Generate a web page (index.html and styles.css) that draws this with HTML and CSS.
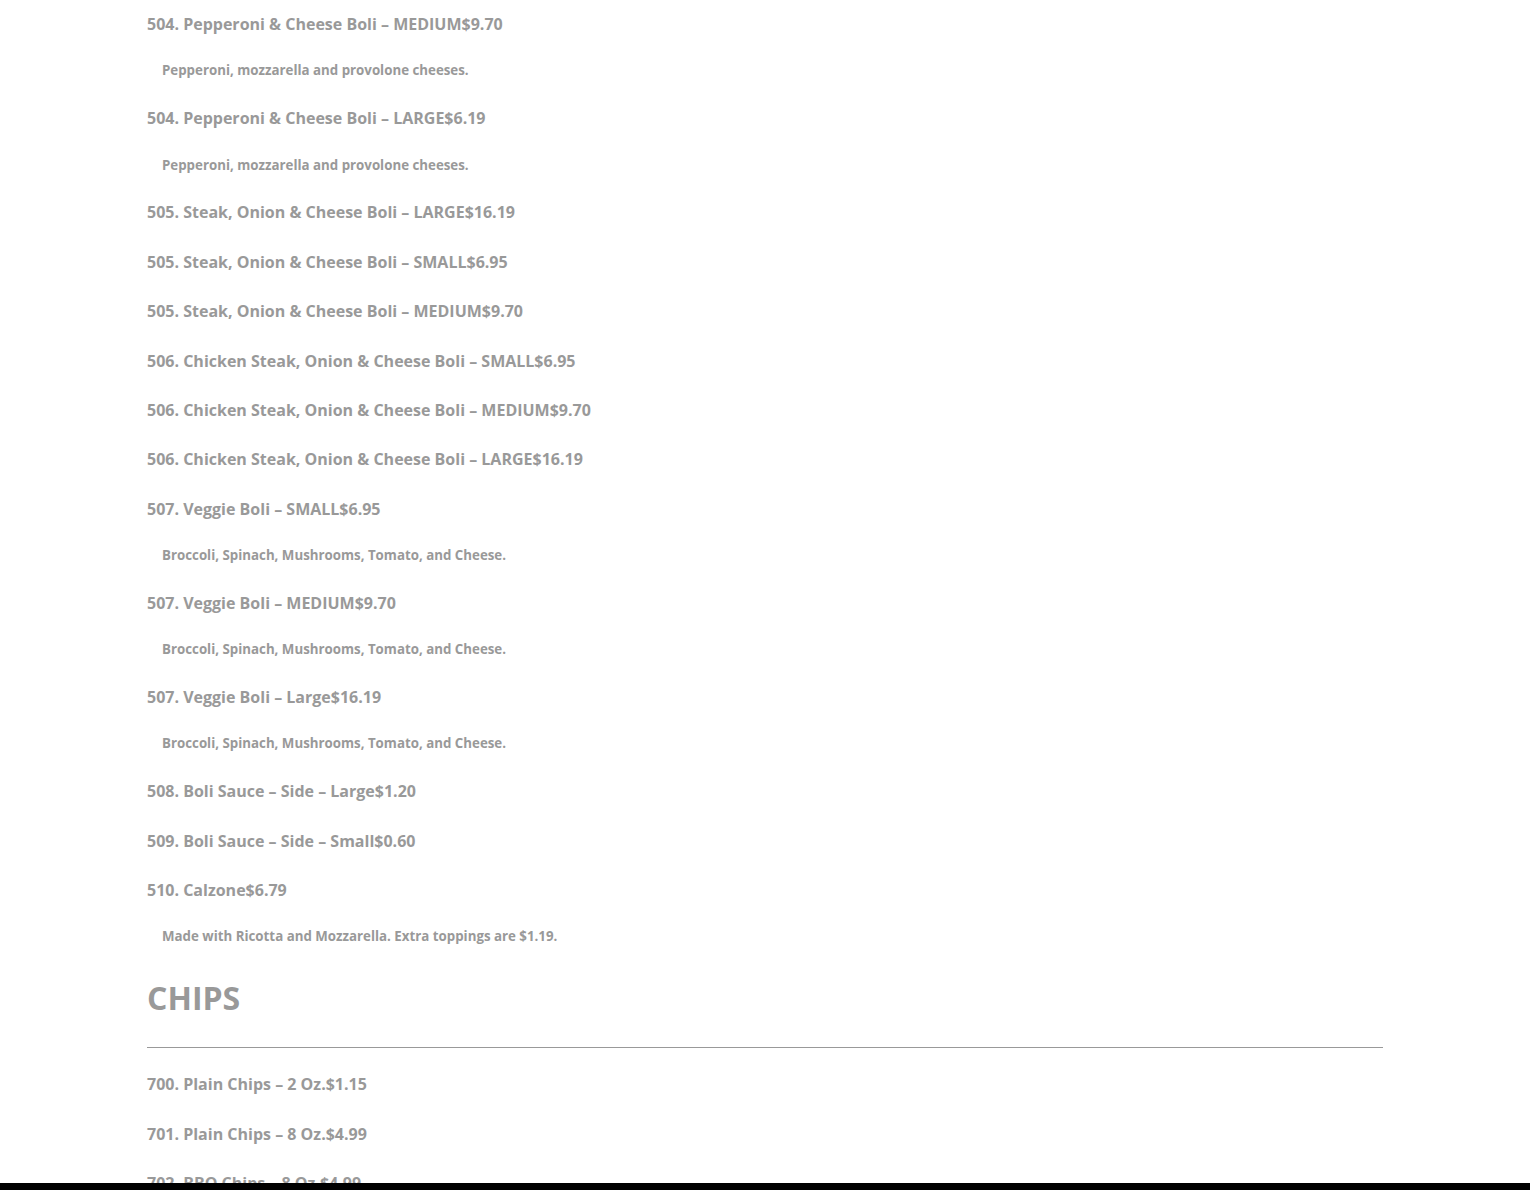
FILE: index.html
```html
<!DOCTYPE html>
<html lang="en">
<head>
  <meta charset="UTF-8" />
  <meta name="viewport" content="width=device-width, initial-scale=1.0" />
  <title>Menu</title>
  <link rel="stylesheet" href="styles.css">
</head>
<body>
  <div class="menu">
    <div class="item">
      <h4 class="item-title">504. Pepperoni &amp; Cheese Boli – MEDIUM<span class="price">$9.70</span></h4>
      <p class="item-desc">Pepperoni, mozzarella and provolone cheeses.</p>
    </div>
    <div class="item">
      <h4 class="item-title">504. Pepperoni &amp; Cheese Boli – LARGE<span class="price">$6.19</span></h4>
      <p class="item-desc">Pepperoni, mozzarella and provolone cheeses.</p>
    </div>
    <div class="item">
      <h4 class="item-title">505. Steak, Onion &amp; Cheese Boli – LARGE<span class="price">$16.19</span></h4>
    </div>
    <div class="item">
      <h4 class="item-title">505. Steak, Onion &amp; Cheese Boli – SMALL<span class="price">$6.95</span></h4>
    </div>
    <div class="item">
      <h4 class="item-title">505. Steak, Onion &amp; Cheese Boli – MEDIUM<span class="price">$9.70</span></h4>
    </div>
    <div class="item">
      <h4 class="item-title">506. Chicken Steak, Onion &amp; Cheese Boli – SMALL<span class="price">$6.95</span></h4>
    </div>
    <div class="item">
      <h4 class="item-title">506. Chicken Steak, Onion &amp; Cheese Boli – MEDIUM<span class="price">$9.70</span></h4>
    </div>
    <div class="item">
      <h4 class="item-title">506. Chicken Steak, Onion &amp; Cheese Boli – LARGE<span class="price">$16.19</span></h4>
    </div>
    <div class="item">
      <h4 class="item-title">507. Veggie Boli – SMALL<span class="price">$6.95</span></h4>
      <p class="item-desc">Broccoli, Spinach, Mushrooms, Tomato, and Cheese.</p>
    </div>
    <div class="item">
      <h4 class="item-title">507. Veggie Boli – MEDIUM<span class="price">$9.70</span></h4>
      <p class="item-desc">Broccoli, Spinach, Mushrooms, Tomato, and Cheese.</p>
    </div>
    <div class="item">
      <h4 class="item-title">507. Veggie Boli – Large<span class="price">$16.19</span></h4>
      <p class="item-desc">Broccoli, Spinach, Mushrooms, Tomato, and Cheese.</p>
    </div>
    <div class="item">
      <h4 class="item-title">508. Boli Sauce – Side – Large<span class="price">$1.20</span></h4>
    </div>
    <div class="item">
      <h4 class="item-title">509. Boli Sauce – Side – Small<span class="price">$0.60</span></h4>
    </div>
    <div class="item">
      <h4 class="item-title">510. Calzone<span class="price">$6.79</span></h4>
      <p class="item-desc">Made with Ricotta and Mozzarella. Extra toppings are $1.19.</p>
    </div>

    <h2 class="section-title">CHIPS</h2>
    <hr class="section-rule">

    <div class="item">
      <h4 class="item-title">700. Plain Chips – 2 Oz.<span class="price">$1.15</span></h4>
    </div>
    <div class="item">
      <h4 class="item-title">701. Plain Chips – 8 Oz.<span class="price">$4.99</span></h4>
    </div>
    <div class="item">
      <h4 class="item-title">702. BBQ Chips – 8 Oz.<span class="price">$4.99</span></h4>
    </div>
  </div>

  <div class="bottom-bar"></div>
</body>
</html>
```

FILE: styles.css
```css
html, body {
  margin: 0;
  padding: 0;
  background: #fff;
  font-family: "Open Sans", Arial, sans-serif;
  color: #999;
}
.menu {
  width: 1236px;
  margin: 0 auto;
  padding-top: 11px;
}
.item-title {
  margin: 0 0 23.4px;
  font-size: 16px;
  font-weight: 700;
  line-height: 26px;
}
.item-desc {
  margin: 0 0 23.4px;
  padding-left: 15px;
  font-size: 13.3px;
  font-weight: 700;
  line-height: 21.4px;
}
.section-title {
  margin: 0;
  padding-top: 7px;
  font-size: 32px;
  font-weight: 700;
  line-height: 40px;
}
.section-rule {
  margin: 29px 0 23px;
  border: none;
  border-top: 1px solid #999;
  height: 0;
}
/* strip pinned to the bottom of the window */
.bottom-bar {
  position: fixed;
  left: 0;
  right: 0;
  bottom: 0;
  height: 7px;
  background: #000;
}
```
